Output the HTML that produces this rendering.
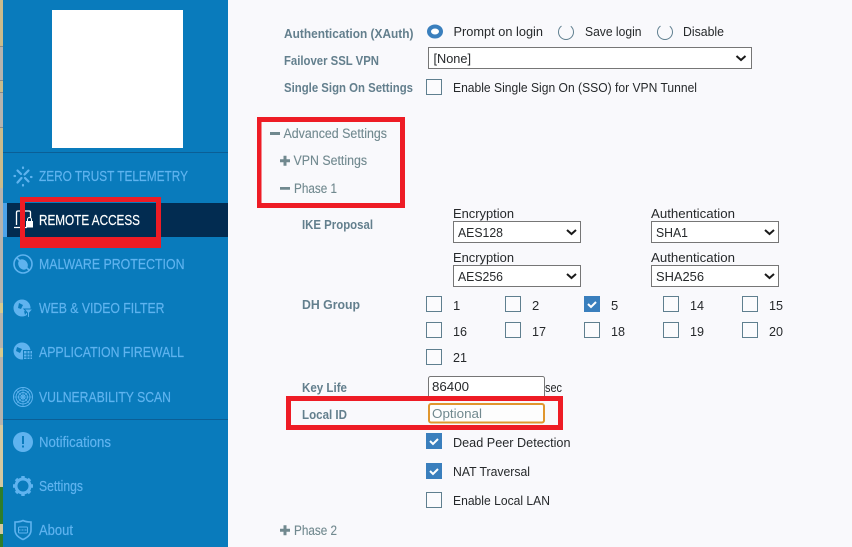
<!DOCTYPE html>
<html lang="en"><head><meta charset="utf-8"><title>Remote Access</title>
<style>
html,body{margin:0;padding:0;width:852px;height:547px;overflow:hidden;background:#f9f9fc}
svg{display:block}
text{font-family:"Liberation Sans",sans-serif;white-space:pre}
.n{font-size:14.500px;fill:#5fb3ef;stroke:#5fb3ef;stroke-width:.2}
.l{font-size:13px;font-weight:bold;fill:#637f8d}
.t{font-size:13px;fill:#26292b}
.h{font-size:13.500px;fill:#71898f;stroke:#71898f;stroke-width:.12}
.cb{fill:#fbfbfd;stroke:#5f7f8f;stroke-width:1}
.sel{fill:#fff;stroke:#767676;stroke-width:1}
.chev{fill:none;stroke:#1a1a1a;stroke-width:2}
.ic{fill:none;stroke:#5fb3ef;stroke-width:1.6}
.if{fill:#5fb3ef}
</style></head><body>
<svg width="852" height="547" viewBox="0 0 852 547" xmlns="http://www.w3.org/2000/svg">
<rect width="852" height="547" fill="#f9f9fc"/>
<!-- left strip -->
<rect x="0" y="0" width="3" height="547" fill="#b5b3ae"/>
<rect x="0" y="0" width="3" height="46" fill="#c9bb8c"/>
<rect x="0" y="46" width="3" height="1" fill="#8a8a8a"/>
<rect x="0" y="80" width="3" height="1" fill="#8a8a8a"/>
<rect x="0" y="81" width="3" height="11" fill="#c9bb8c"/>
<rect x="0" y="92" width="3" height="1" fill="#8a8a8a"/>
<rect x="0" y="127" width="3" height="1" fill="#8a8a8a"/>
<rect x="0" y="128" width="3" height="60" fill="#c9bb8c"/>
<rect x="0" y="303" width="3" height="10" fill="#d8c98e"/>
<rect x="0" y="348" width="3" height="9" fill="#d8c98e"/>
<rect x="0" y="425" width="3" height="62" fill="#d3c8a0"/>
<rect x="0" y="487" width="3" height="37" fill="#2f7d2a"/>
<rect x="0" y="524" width="3" height="10" fill="#d3c8a0"/>
<rect x="0" y="534" width="3" height="13" fill="#2f7d2a"/>
<!-- sidebar -->
<rect x="3" y="0" width="225" height="547" fill="#097bbc"/>
<rect x="52" y="10" width="131" height="138" fill="#fff"/>
<rect x="3" y="152" width="225" height="1" fill="#0b5f96"/>
<rect x="3" y="419" width="225" height="1" fill="#0b5f96"/>
<rect x="3" y="203" width="225" height="34" fill="#022c51"/>
<rect x="3" y="203" width="4" height="34" fill="#4da3e8"/>

<!-- zero trust icon -->
<g fill="none" stroke="#5fb3ef" stroke-width="2.200" stroke-linecap="round"><path d="M17.500 170.500l3.500 3.500M25 178l3.500 3.500M28.500 170.500l-4 4M21.500 178l-4 4.500M14.500 176h.5M31 177h.5M23 167.500v.5M23 185v.5"/></g>
<text class="n" x="39" y="181" textLength="149" lengthAdjust="spacingAndGlyphs">ZERO TRUST TELEMETRY</text>
<!-- remote icon -->
<path d="M16.500 225v-12.500q0-1.500 1.500-1.500h11q1.500 0 1.500 1.500v5M14 227.500h13" fill="none" stroke="#fff" stroke-width="1.300"/>
<rect x="26" y="221" width="7" height="6.500" fill="#fff"/><path d="M27.500 221v-1.500a2 2 0 0 1 4 0v1.500" fill="none" stroke="#fff" stroke-width="1"/>
<text x="39" y="225" font-size="14.500" fill="#fff" stroke="#fff" stroke-width=".2" textLength="101" lengthAdjust="spacingAndGlyphs">REMOTE ACCESS</text>
<!-- malware icon -->
<circle cx="23" cy="264" r="9" class="ic"/><ellipse cx="23" cy="264.500" rx="4.500" ry="5.500" class="if" transform="rotate(-35 23 264.500)"/><path d="M17 258l12 12" class="ic"/>
<text class="n" x="39" y="269" textLength="145.500" lengthAdjust="spacingAndGlyphs">MALWARE PROTECTION</text>
<!-- web icon -->
<circle cx="22" cy="308" r="8.500" class="if"/><path d="M19 303l4 2-2 4-3-1zM24 311l3 1-2 3z" fill="#097bbc"/><path d="M24 309h9l-3.500 4v5l-2-1v-4z" fill="#5fb3ef" stroke="#097bbc"/>
<text class="n" x="39" y="313" textLength="125.500" lengthAdjust="spacingAndGlyphs">WEB &amp; VIDEO FILTER</text>
<!-- app firewall icon -->
<circle cx="22" cy="351" r="8.500" class="if"/><path d="M17 347l5 2-2 4-4-2z" fill="#097bbc"/><rect x="23" y="350" width="10" height="10" fill="#097bbc"/><path d="M24 351h8v8h-8z" class="if"/><path d="M24 354h8M24 357h8M27 351v8M30 351v8" stroke="#097bbc" fill="none"/>
<text class="n" x="39" y="357" textLength="145" lengthAdjust="spacingAndGlyphs">APPLICATION FIREWALL</text>
<!-- vuln icon -->
<g fill="none" stroke="#5fb3ef"><circle cx="23" cy="397" r="9.500"/><circle cx="23" cy="397" r="7"/><circle cx="23" cy="397" r="4.500"/><circle cx="23" cy="397" r="2"/><path d="M13.500 397h19M23 387.500v19M16.300 390.300l13.400 13.400M29.700 390.300l-13.400 13.400" stroke-width=".6"/></g>
<text class="n" x="39" y="402" textLength="132" lengthAdjust="spacingAndGlyphs">VULNERABILITY SCAN</text>
<!-- notifications icon -->
<circle cx="23" cy="442" r="10" class="if"/><rect x="22" y="436" width="2" height="8" fill="#097bbc"/><rect x="22" y="445.500" width="2" height="2" fill="#097bbc"/>
<text class="n" x="39" y="447" textLength="72" lengthAdjust="spacingAndGlyphs">Notifications</text>
<!-- settings icon -->
<circle cx="23" cy="486" r="7" fill="none" stroke="#5fb3ef" stroke-width="3"/><path d="M23 476v3.500M23 492.500v3.500M13 486h3.500M29.500 486h3.500M16 479l2.500 2.500M27.500 490.500l2.500 2.500M30 479l-2.500 2.500M18.500 490.500l-2.500 2.500" stroke="#5fb3ef" stroke-width="3.400" fill="none"/>
<text class="n" x="39" y="491" textLength="44" lengthAdjust="spacingAndGlyphs">Settings</text>
<!-- about icon -->
<path d="M15 522q5 0 8-1.500q3 1.500 8 1.500v8q0 6-8 9.500q-8-3.500-8-9.500z" class="ic"/><rect x="18.500" y="527" width="9" height="6" rx="1" fill="none" stroke="#5fb3ef"/><path d="M18.500 530h9" stroke="#5fb3ef" stroke-dasharray="2 1"/>
<text class="n" x="39" y="535" textLength="34" lengthAdjust="spacingAndGlyphs">About</text>

<!-- red box 1 -->
<path d="M20 197h141v51h-141zM25 202v35h131v-35z" fill="#ee1c25" fill-rule="evenodd"/>

<!-- top form -->
<text class="l" x="284" y="38" textLength="129.500" lengthAdjust="spacingAndGlyphs">Authentication (XAuth)</text>
<text class="l" x="284" y="65" textLength="95" lengthAdjust="spacingAndGlyphs">Failover SSL VPN</text>
<text class="l" x="284" y="92" textLength="129" lengthAdjust="spacingAndGlyphs">Single Sign On Settings</text>

<ellipse cx="435" cy="31.500" rx="6" ry="5" fill="#fff" stroke="#3a7fbd" stroke-width="4"/>
<circle cx="566" cy="32" r="7.500" fill="none" stroke="#5f7f8f" stroke-dasharray="37.100 10" stroke-dashoffset="6.800"/>
<circle cx="665" cy="32" r="7.500" fill="none" stroke="#5f7f8f" stroke-dasharray="37.100 10" stroke-dashoffset="6.800"/>
<text class="t" x="453.500" y="36" textLength="89.500" lengthAdjust="spacingAndGlyphs">Prompt on login</text>
<text class="t" x="585" y="36" textLength="56.500" lengthAdjust="spacingAndGlyphs">Save login</text>
<text class="t" x="683" y="36" textLength="41" lengthAdjust="spacingAndGlyphs">Disable</text>

<rect class="sel" x="428.500" y="47.500" width="323" height="21"/>
<text class="t" x="433.500" y="63" textLength="37.500" lengthAdjust="spacingAndGlyphs">[None]</text>
<path class="chev" d="M736.500 56l4.500 4 4.500-4"/>

<rect class="cb" x="426.500" y="79.500" width="15" height="15"/>
<text class="t" x="453" y="92" textLength="244" lengthAdjust="spacingAndGlyphs">Enable Single Sign On (SSO) for VPN Tunnel</text>

<!-- red box 2 -->
<path d="M257 117h148v91h-148zM261.500 122v81h138.500v-81z" fill="#ee1c25" fill-rule="evenodd"/>
<path d="M270 132h10v3h-10zM280 187h10v2.800h-10z" fill="#71898f"/>
<path d="M280 159.200h10v3h-10zM283.500 155.700h3v10h-3z" fill="#71898f"/>
<text class="h" x="283.500" y="138" textLength="103.500" lengthAdjust="spacingAndGlyphs">Advanced Settings</text>
<text class="h" x="293.500" y="165" textLength="73.500" lengthAdjust="spacingAndGlyphs">VPN Settings</text>
<text class="h" x="294" y="193" textLength="43" lengthAdjust="spacingAndGlyphs">Phase 1</text>

<!-- IKE -->
<text class="l" x="302" y="229" textLength="71" lengthAdjust="spacingAndGlyphs">IKE Proposal</text>
<text class="t" x="453" y="218" textLength="61" lengthAdjust="spacingAndGlyphs">Encryption</text>
<text class="t" x="651" y="218" textLength="84" lengthAdjust="spacingAndGlyphs">Authentication</text>
<text class="t" x="453" y="262" textLength="61" lengthAdjust="spacingAndGlyphs">Encryption</text>
<text class="t" x="651" y="262" textLength="84" lengthAdjust="spacingAndGlyphs">Authentication</text>
<rect class="sel" x="453.500" y="221.500" width="127" height="21"/>
<rect class="sel" x="651.500" y="221.500" width="127" height="21"/>
<rect class="sel" x="453.500" y="265.500" width="127" height="21"/>
<rect class="sel" x="651.500" y="265.500" width="127" height="21"/>
<text class="t" x="458" y="237" textLength="45" lengthAdjust="spacingAndGlyphs">AES128</text>
<text class="t" x="656" y="237" textLength="32" lengthAdjust="spacingAndGlyphs">SHA1</text>
<text class="t" x="458" y="281" textLength="45" lengthAdjust="spacingAndGlyphs">AES256</text>
<text class="t" x="656" y="281" textLength="48" lengthAdjust="spacingAndGlyphs">SHA256</text>
<path class="chev" d="M567 230l4.500 4 4.500-4M765 230l4.500 4 4.500-4M567 274l4.500 4 4.500-4M765 274l4.500 4 4.500-4"/>

<!-- DH -->
<text class="l" x="302" y="309" textLength="58" lengthAdjust="spacingAndGlyphs">DH Group</text>
<rect class="cb" x="426.500" y="296.500" width="15" height="15"/>
<rect class="cb" x="505.500" y="296.500" width="15" height="15"/>
<rect x="584" y="296" width="16" height="16" fill="#3a7fbd"/>
<path d="M588 304l3 3 5-5" fill="none" stroke="#fff" stroke-width="2"/>
<rect class="cb" x="663.500" y="296.500" width="15" height="15"/>
<rect class="cb" x="742.500" y="296.500" width="15" height="15"/>
<rect class="cb" x="426.500" y="322.500" width="15" height="15"/>
<rect class="cb" x="505.500" y="322.500" width="15" height="15"/>
<rect class="cb" x="584.500" y="322.500" width="15" height="15"/>
<rect class="cb" x="663.500" y="322.500" width="15" height="15"/>
<rect class="cb" x="742.500" y="322.500" width="15" height="15"/>
<rect class="cb" x="426.500" y="349.500" width="15" height="15"/>
<text class="t" x="453" y="310">1</text>
<text class="t" x="532" y="310">2</text>
<text class="t" x="611" y="310">5</text>
<text class="t" x="690" y="310" textLength="14" lengthAdjust="spacingAndGlyphs">14</text>
<text class="t" x="769" y="310" textLength="14" lengthAdjust="spacingAndGlyphs">15</text>
<text class="t" x="453" y="336" textLength="14" lengthAdjust="spacingAndGlyphs">16</text>
<text class="t" x="532" y="336" textLength="14" lengthAdjust="spacingAndGlyphs">17</text>
<text class="t" x="611" y="336" textLength="14" lengthAdjust="spacingAndGlyphs">18</text>
<text class="t" x="690" y="336" textLength="14" lengthAdjust="spacingAndGlyphs">19</text>
<text class="t" x="769" y="336" textLength="14" lengthAdjust="spacingAndGlyphs">20</text>
<text class="t" x="453" y="362" textLength="14" lengthAdjust="spacingAndGlyphs">21</text>

<!-- key life -->
<text class="l" x="302" y="392" textLength="45" lengthAdjust="spacingAndGlyphs">Key Life</text>
<rect x="428.500" y="376.500" width="116" height="24" rx="2" fill="#fff" stroke="#767676"/>
<text class="t" x="432" y="391" textLength="37" lengthAdjust="spacingAndGlyphs">86400</text>
<text class="t" x="545" y="392" textLength="17" lengthAdjust="spacingAndGlyphs">sec</text>

<!-- red box 3 -->
<path d="M286 396h277v34h-277zM291 401v24h267v-24z" fill="#ee1c25" fill-rule="evenodd"/>
<text class="l" x="302" y="419" textLength="45" lengthAdjust="spacingAndGlyphs">Local ID</text>
<rect x="429" y="404" width="115" height="18.500" rx="2" fill="#fdfdfd" stroke="#e0962e" stroke-width="2"/>
<text x="432" y="418" font-size="13" fill="#71898f" textLength="50" lengthAdjust="spacingAndGlyphs">Optional</text>

<rect x="426" y="433" width="16" height="16" fill="#3a7fbd"/>
<path d="M430 441l3 3 5-5" fill="none" stroke="#fff" stroke-width="2"/>
<text class="t" x="453" y="447" textLength="117.500" lengthAdjust="spacingAndGlyphs">Dead Peer Detection</text>
<rect x="426" y="463" width="16" height="16" fill="#3a7fbd"/>
<path d="M430 471l3 3 5-5" fill="none" stroke="#fff" stroke-width="2"/>
<text class="t" x="453" y="476" textLength="77" lengthAdjust="spacingAndGlyphs">NAT Traversal</text>
<rect class="cb" x="426.500" y="492.500" width="15" height="15"/>
<text class="t" x="453" y="505" textLength="97" lengthAdjust="spacingAndGlyphs">Enable Local LAN</text>

<path d="M280 528.700h10v3h-10zM283.500 525.200h3v10h-3z" fill="#71898f"/>
<text class="h" x="294" y="535" textLength="43" lengthAdjust="spacingAndGlyphs">Phase 2</text>
</svg>
</body></html>
